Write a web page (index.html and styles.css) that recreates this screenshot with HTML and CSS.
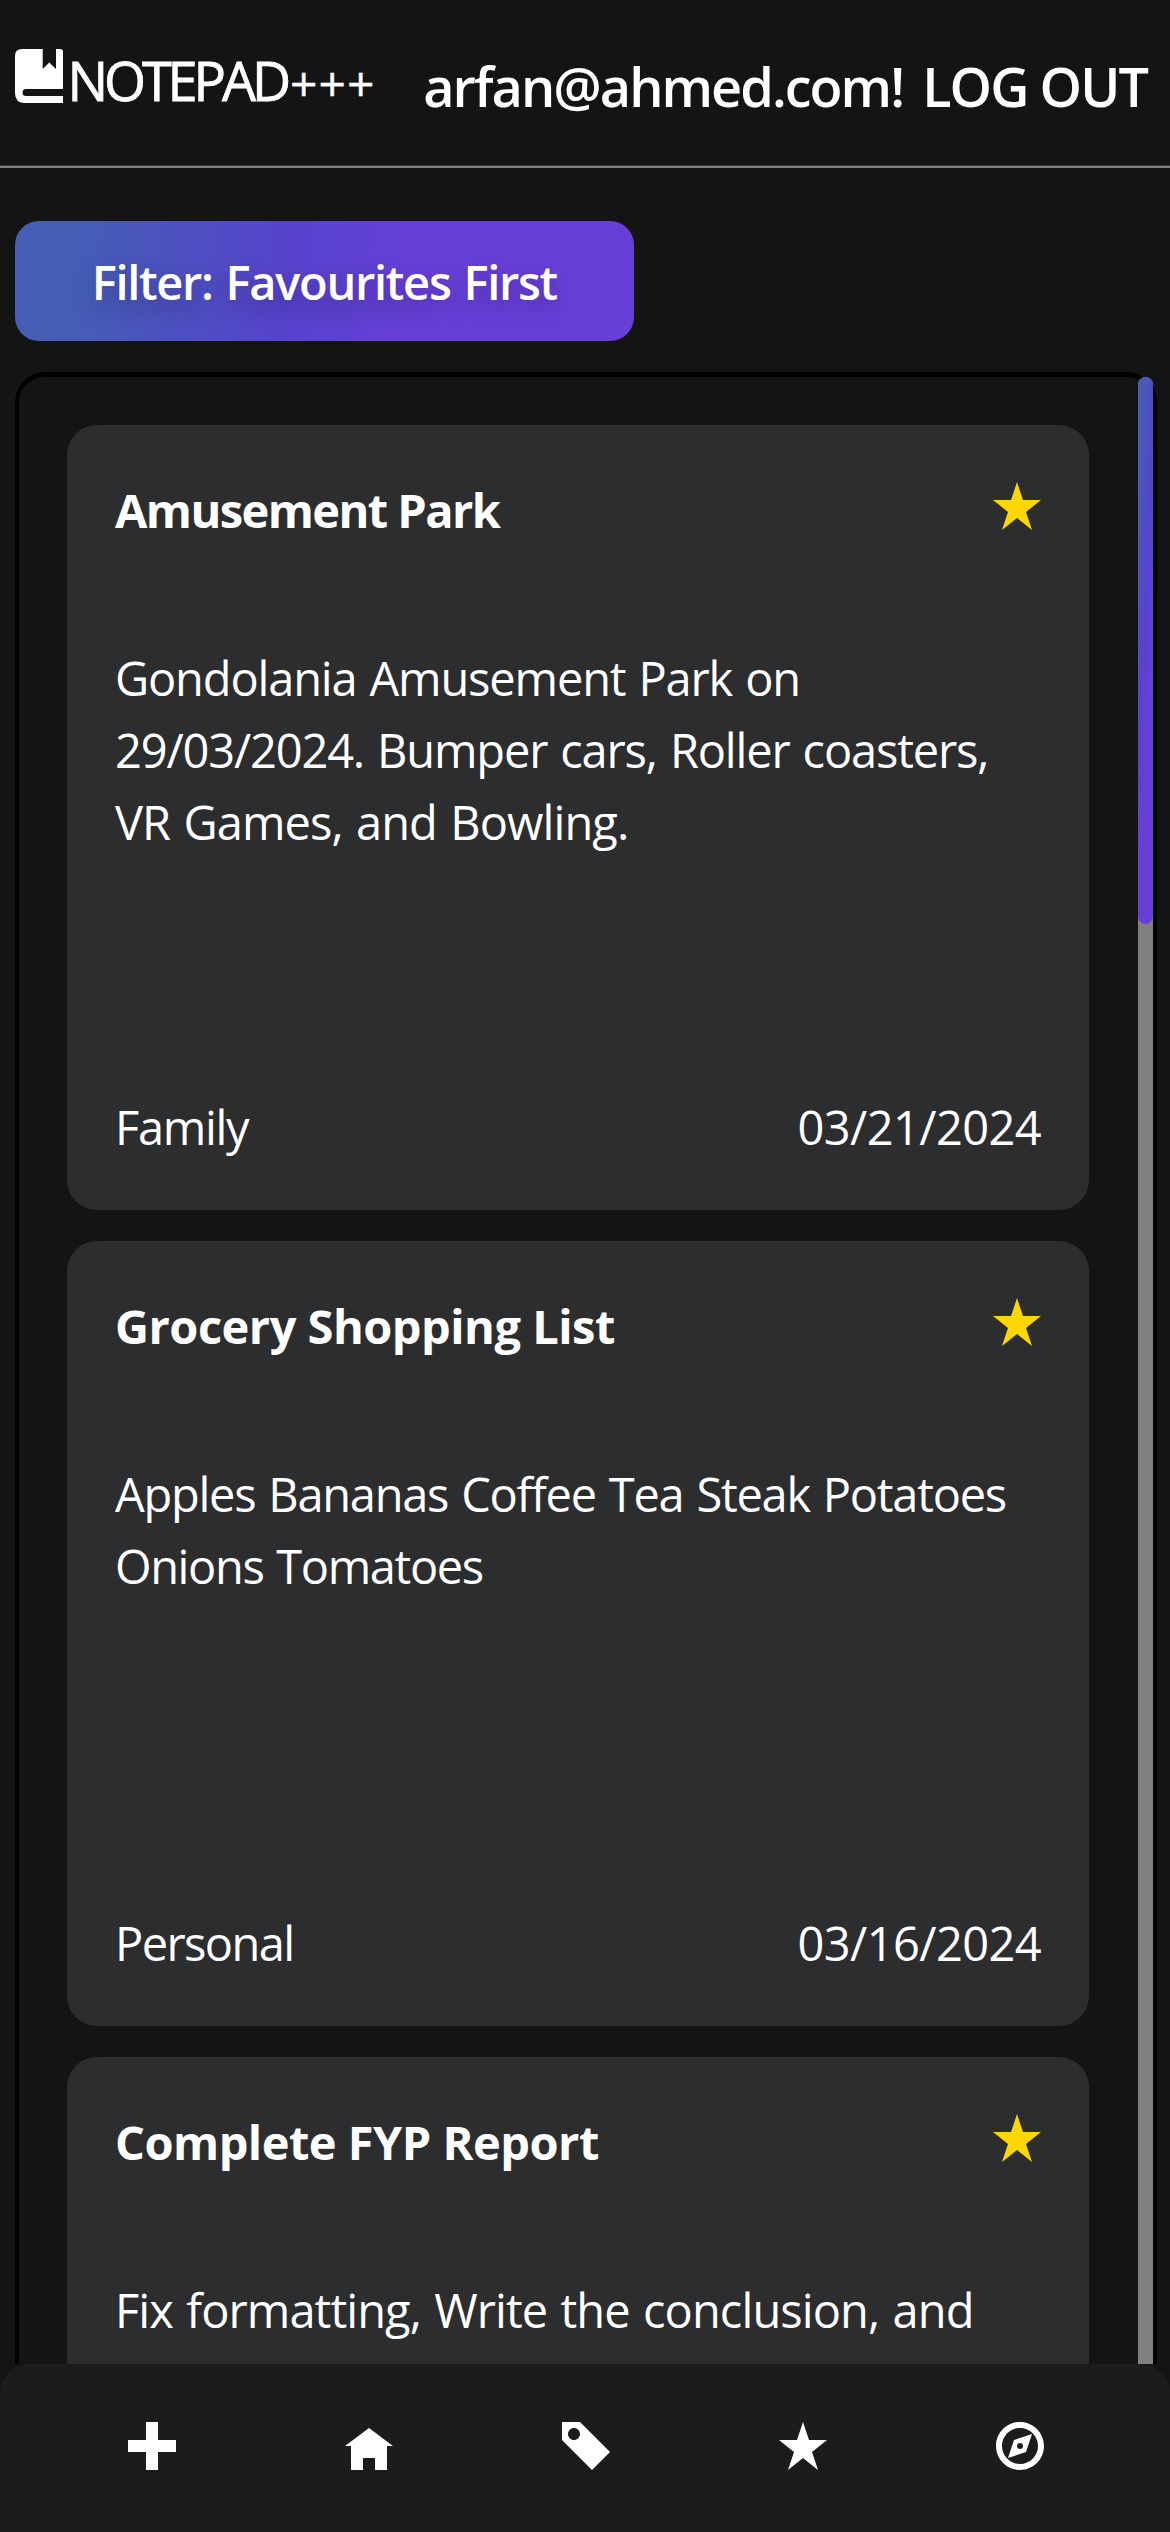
FILE: index.html
```html
<!DOCTYPE html>
<html lang="en">
<head>
<meta charset="utf-8">
<title>Notepad+++</title>
<link rel="stylesheet" href="styles.css">
</head>
<body>
<div class="app">
  <header class="header">
    <a class="brand">
      <svg class="brand-icon" viewBox="0 0 48 54"><path d="M7 0H27.7V20L34.3 13.5 41 20V0H45Q48 0 48 3V40H11A3.5 3.5 0 0 0 11 47H48V54H10Q0 54 0 44V7Q0 0 7 0Z"/></svg>
      <span class="brand-name">NOTEPAD</span><span class="brand-plus">+++</span>
    </a>
    <div class="account"><span class="email">arfan@ahmed.com!</span><span class="logout">LOG OUT</span></div>
  </header>

  <main class="main">
    <button class="filter">Filter: Favourites First</button>
    <section class="notes">
      <div class="list">
        <article class="card">
          <div class="card-head">
            <h2 class="title title-park">Amusement Park</h2>
            <svg class="star" viewBox="0 0 8 8"><path d="M4 0l-1 3h-3l2.5 2-1 3 2.5-2 2.5 2-1-3 2.5-2h-3l-1-3z"/></svg>
          </div>
          <p class="text"><span class="line">Gondolania Amusement Park on</span> <span class="line">29/03/2024. Bumper cars, Roller coasters,</span> <span class="line line-loose">VR Games, and Bowling.</span></p>
          <div class="card-foot"><span class="tag">Family</span><time class="date">03/21/2024</time></div>
        </article>
        <article class="card">
          <div class="card-head">
            <h2 class="title">Grocery Shopping List</h2>
            <svg class="star" viewBox="0 0 8 8"><path d="M4 0l-1 3h-3l2.5 2-1 3 2.5-2 2.5 2-1-3 2.5-2h-3l-1-3z"/></svg>
          </div>
          <p class="text"><span class="line line-snug">Apples Bananas Coffee Tea Steak Potatoes</span> <span class="line line-tight">Onions Tomatoes</span></p>
          <div class="card-foot"><span class="tag tag-tight">Personal</span><time class="date">03/16/2024</time></div>
        </article>
        <article class="card">
          <div class="card-head">
            <h2 class="title">Complete FYP Report</h2>
            <svg class="star" viewBox="0 0 8 8"><path d="M4 0l-1 3h-3l2.5 2-1 3 2.5-2 2.5 2-1-3 2.5-2h-3l-1-3z"/></svg>
          </div>
          <p class="text"><span class="line line-loose">Fix formatting, Write the conclusion, and</span></p>
        </article>
      </div>
      <div class="track"><div class="thumb"></div></div>
    </section>
  </main>

  <nav class="nav">
    <a class="nav-item"><svg class="nav-icon" viewBox="0 0 8 8"><path d="M3 0v3h-3v2h3v3h2v-3h3v-2h-3v-3h-2z"/></svg></a>
    <a class="nav-item"><svg class="nav-icon" viewBox="0 0 8 8"><path d="M4 1l-4 3h1v4h2v-2h2v2h2v-4h1l-4-3z"/></svg></a>
    <a class="nav-item"><svg class="nav-icon" viewBox="0 0 8 8"><path d="M0 0v3l5 5 3-3-5-5h-3zm2 1c.55 0 1 .45 1 1s-.45 1-1 1-1-.45-1-1 .45-1 1-1z"/></svg></a>
    <a class="nav-item"><svg class="nav-icon" viewBox="0 0 8 8"><path d="M4 0l-1 3h-3l2.5 2-1 3 2.5-2 2.5 2-1-3 2.5-2h-3l-1-3z"/></svg></a>
    <a class="nav-item"><svg class="nav-icon" viewBox="0 0 8 8"><path d="M4 0c-2.2 0-4 1.8-4 4s1.8 4 4 4 4-1.8 4-4-1.8-4-4-4zm0 1c1.66 0 3 1.34 3 3s-1.34 3-3 3-3-1.34-3-3 1.34-3 3-3zm2 1l-3 1-1 3 3-1 1-3zm-2 1.5c.28 0 .5.22.5.5s-.22.5-.5.5-.5-.22-.5-.5.22-.5.5-.5z"/></svg></a>
  </nav>
</div>
</body>
</html>
```
FILE: styles.css
```css
* { box-sizing: border-box; }

body {
  margin: 0;
  background: #141414;
  color: #fff;
  font-family: "Open Sans", "Noto Sans", sans-serif;
  font-size: 47px;
  line-height: 72px;
}

.app {
  display: flex;
  flex-direction: column;
  height: 2532px;
  overflow: hidden;
}

/* Header */
.header {
  display: flex;
  justify-content: space-between;
  align-items: flex-start;
  height: 168px;
  padding: 0 23px 0 14.5px;
  border-bottom: 2px solid #808080;
  box-shadow: inset 0 -1px #3c3c3c;
  flex: none;
  white-space: nowrap;
}

.brand { display: flex; padding-top: 44px; }
.brand-icon { width: 48px; height: 54px; margin-top: 5px; fill: #fff; }
.brand-name {
  margin-left: 5px;
  font-size: 54px;
  letter-spacing: -4.1px;
  -webkit-text-stroke: .8px #fff;
}
.brand-plus {
  margin-left: 3px;
  padding-top: 2.5px;
  font-size: 48px;
  letter-spacing: 1px;
  -webkit-text-stroke: .4px #fff;
}

.account {
  display: flex;
  padding-top: 49.5px;
  font-size: 54px;
  font-weight: 600;
  letter-spacing: -1.95px;
}
.logout { margin-left: 19px; letter-spacing: -1.9px; }

/* Filter button */
.main {
  display: flex;
  flex-direction: column;
  align-items: flex-start;
  flex: 1;
  min-height: 0;
  padding: 53px 13px 0 15px;
}

.filter {
  flex: none;
  width: 618.5px;
  height: 120px;
  margin-bottom: 31px;
  padding: 1px 0 0;
  border: 0;
  border-radius: 24px;
  background: linear-gradient(92.88deg, #455eb5 9.16%, #5643cc 43.89%, #673fd7 64.72%);
  color: #fff;
  font: 600 47px/72px "Open Sans", "Noto Sans", sans-serif;
  letter-spacing: -1.3px;
  word-spacing: 2px;
  text-shadow: rgba(0, 0, 0, .25) 0 9px 24px;
}

/* Note list */
.notes {
  display: flex;
  align-self: stretch;
  justify-content: space-between;
  flex: 1;
  min-height: 0;
  border: 4.5px solid #000;
  border-top-width: 5px;
  border-bottom: 0;
  border-radius: 30px 30px 0 0;
}

.list {
  display: flex;
  flex-direction: column;
  gap: 31px;
  width: 1118px;
  padding: 48px 48px 0 48px;
}

.card {
  display: flex;
  flex-direction: column;
  flex: none;
  height: 785px;
  padding: 49px 48px 47px;
  border-radius: 30px;
  background: #2c2d2f;
}

.card-head { display: flex; justify-content: space-between; margin-bottom: 96px; }
.title { margin: 0; font-size: 47px; font-weight: 700; letter-spacing: -.52px; }
.title-park { letter-spacing: -1.57px; }
.star { width: 48px; height: 48px; margin-top: 8px; fill: #ffd700; }

.text { flex: 1; margin: 0; letter-spacing: -1.16px; word-spacing: 2px; }
.line { display: block; white-space: nowrap; }
.line-loose { letter-spacing: -.92px; }
.line-snug { letter-spacing: -1.26px; }
.line-tight { letter-spacing: -1.38px; }

.card-foot { display: flex; justify-content: space-between; }
.tag { letter-spacing: -1.3px; }
.tag-tight { letter-spacing: -1.6px; }
.date { letter-spacing: -.6px; }

.track { width: 15px; border-radius: 8px 8px 0 0; background: #808080; }
.thumb {
  height: 547px;
  border-radius: 8px;
  background: linear-gradient(92.88deg, #455eb5 9.16%, #5643cc 43.89%, #673fd7 64.72%);
}

/* Bottom navigation */
.nav {
  display: grid;
  grid-template-columns: repeat(5, 1fr);
  flex: none;
  height: 168px;
  padding: 58px 42px 0 44px;
  border-radius: 30px 30px 0 0;
  background: #1c1c1c;
}
.nav-item { display: flex; justify-content: center; }
.nav-icon { width: 48px; height: 48px; fill: #fff; }
```
